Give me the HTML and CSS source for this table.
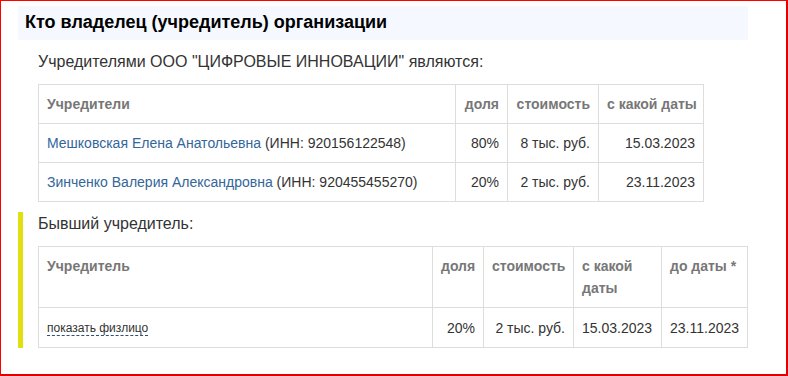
FILE: index.html
```html
<!DOCTYPE html>
<html lang="ru">
<head>
<meta charset="utf-8">
<title>Кто владелец</title>
<link rel="stylesheet" href="styles.css">
</head>
<body>
<div class="frame">
  <div class="wrap">
    <h2 class="title">Кто владелец (учредитель) организации</h2>
    <p class="intro">Учредителями ООО "ЦИФРОВЫЕ ИННОВАЦИИ" являются:</p>
    <table class="grid grid-current">
      <colgroup>
        <col class="c-name1"><col class="c-share1"><col class="c-cost1"><col class="c-date1">
      </colgroup>
      <thead>
        <tr>
          <th class="left">Учредители</th>
          <th class="right">доля</th>
          <th class="right">стоимость</th>
          <th class="right">с какой даты</th>
        </tr>
      </thead>
      <tbody>
        <tr>
          <td class="left"><a class="person" href="#">Мешковская Елена Анатольевна</a> (ИНН: 920156122548)</td>
          <td class="right">80%</td>
          <td class="right">8 тыс. руб.</td>
          <td class="right">15.03.2023</td>
        </tr>
        <tr>
          <td class="left"><a class="person" href="#">Зинченко Валерия Александровна</a> (ИНН: 920455455270)</td>
          <td class="right">20%</td>
          <td class="right">2 тыс. руб.</td>
          <td class="right">23.11.2023</td>
        </tr>
      </tbody>
    </table>
    <div class="former">
      <p class="intro intro-former">Бывший учредитель:</p>
      <table class="grid grid-former">
        <colgroup>
          <col class="c-name2"><col class="c-share2"><col class="c-cost2"><col class="c-from2"><col class="c-to2">
        </colgroup>
        <thead>
          <tr>
            <th class="left">Учредитель</th>
            <th class="right">доля</th>
            <th class="right">стоимость</th>
            <th class="left">с какой даты</th>
            <th class="left">до даты *</th>
          </tr>
        </thead>
        <tbody>
          <tr>
            <td class="left"><span class="reveal">показать физлицо</span></td>
            <td class="right">20%</td>
            <td class="right">2 тыс. руб.</td>
            <td class="left">15.03.2023</td>
            <td class="left">23.11.2023</td>
          </tr>
        </tbody>
      </table>
    </div>
  </div>
</div>
</body>
</html>
```

FILE: styles.css
```css
html, body {
  margin: 0;
  padding: 0;
  background: #ffffff;
}

body {
  font-family: "Liberation Sans", Arial, sans-serif;
  color: #333333;
}

.frame {
  box-sizing: border-box;
  width: 788px;
  height: 376px;
  border: 1px solid #ff0000;
  border-right-width: 2px;
  border-bottom-width: 2px;
  border-bottom-color: #e00000;
  border-right-color: #e00000;
  overflow: hidden;
}

.wrap {
  margin: 5px 0 0 17px;
  width: 730px;
}

.title {
  margin: 0;
  height: 34px;
  line-height: 33px;
  padding-left: 7px;
  background: #f5f9ff;
  font-size: 18px;
  font-weight: bold;
  color: #000000;
}

.intro {
  margin: 11px 0 11px 20px;
  font-size: 16px;
  line-height: 22px;
  color: #333333;
}

.grid {
  border-collapse: collapse;
  table-layout: fixed;
  font-size: 14px;
  line-height: 22px;
}

.grid th,
.grid td {
  border: 1px solid #dddddd;
  padding: 8px 8px;
  white-space: nowrap;
}

.grid th {
  font-weight: bold;
  color: #777777;
  vertical-align: top;
}

.grid td {
  color: #333333;
  vertical-align: middle;
}

.left { text-align: left; }
.right { text-align: right; }

.grid-current {
  margin-left: 20px;
  width: 666px;
}

.c-name1 { width: 417px; }
.c-share1 { width: 52px; }
.c-cost1 { width: 91px; }
.c-date1 { width: 105px; }

.person {
  color: #336699;
  text-decoration: none;
}

.former {
  margin-top: 10px;
  border-left: 5px solid #e0e00e;
  padding: 1px 0 0 15px;
}

.intro-former {
  margin: 0 0 11px 0;
}

.grid-former {
  width: 710px;
}

.grid-former th {
  white-space: normal;
}

.c-name2 { width: 394px; }
.c-share2 { width: 51px; }
.c-cost2 { width: 90px; }
.c-from2 { width: 88px; }
.c-to2 { width: 86px; }

.reveal {
  font-size: 12px;
  color: #333333;
  border-bottom: 1px dashed #2d4f7f;
  cursor: pointer;
}
```
